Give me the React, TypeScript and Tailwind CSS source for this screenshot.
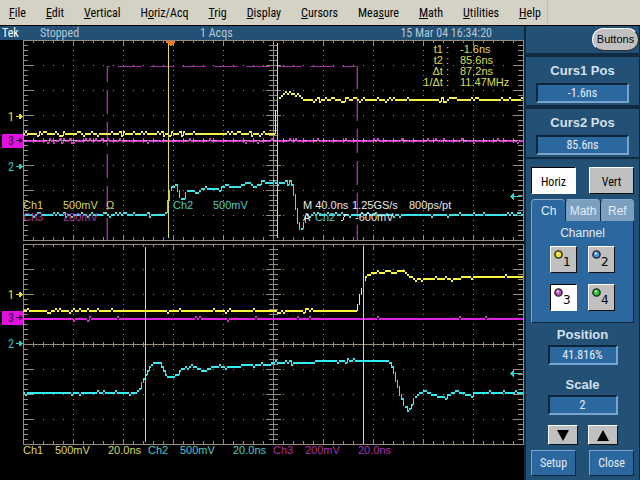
import React, { useMemo, useState } from 'react';

type Point = [number, number];

const YELLOW = '#f4f050';
const CYAN = '#3fe4e8';
const MAGENTA = '#d838d0';
const GRID = '#988c7c';

const MENUS: [string, number][] = [
  ['File', 0], ['Edit', 0], ['Vertical', 0], ['Horiz/Acq', 1], ['Trig', 0], ['Display', 0],
  ['Cursors', 0], ['Measure', 3], ['Math', 0], ['Utilities', 0], ['Help', 0]
];

const TOP_CH1: Point[] = [
  [23, 133], [274, 133], [276, 110], [278, 98], [280, 96], [284, 93], [290, 92], [296, 92],
  [298, 93], [301, 97], [305, 100], [523, 99]
];
const TOP_CH2: Point[] = [
  [23, 214], [164, 214], [166, 211], [168, 200], [170, 190], [172, 186], [176, 184], [178, 189],
  [180, 196], [184, 198], [187, 190], [190, 189], [198, 192], [203, 187], [212, 188], [240, 185],
  [270, 182], [291, 181], [293, 188], [296, 208], [298, 222], [301, 232], [304, 222], [307, 213],
  [310, 215], [523, 214]
];
const TOP_CH3: Point[] = [[23, 140], [523, 140]];

const ZOOM_CH1: Point[] = [
  [23, 310], [357, 310], [359, 297], [361, 291], [363, 284], [365, 277], [368, 274], [374, 271],
  [384, 271], [389, 270], [395, 272], [400, 269], [404, 269], [408, 274], [413, 277], [430, 278],
  [460, 277], [523, 276]
];
const ZOOM_CH2: Point[] = [
  [23, 392], [137, 392], [140, 388], [144, 377], [147, 371], [150, 365], [153, 362], [160, 362],
  [163, 367], [167, 375], [174, 376], [178, 373], [181, 368], [196, 366], [203, 370], [212, 367],
  [240, 365], [270, 363], [300, 362], [330, 360], [388, 360], [391, 364], [394, 372], [397, 383],
  [400, 394], [404, 403], [408, 409], [411, 406], [415, 396], [419, 392], [426, 390], [432, 394],
  [443, 396], [449, 394], [456, 390], [467, 394], [480, 392], [493, 393], [500, 392], [523, 392]
];
const ZOOM_CH3: Point[] = [[23, 318], [523, 318]];

const levelAt = (points: Point[], x: number) => {
  for (let i = 1; i < points.length; i++) {
    const [x0, y0] = points[i - 1];
    const [x1, y1] = points[i];
    if (x <= x1) return y0 + ((y1 - y0) * (x - x0)) / (x1 - x0);
  }
  return points[points.length - 1][1];
};

const tracePath = (points: Point[], seed: number, noise: number) => {
  let state = seed;
  const random = () => {
    state = (state * 1103515245 + 12345) % 2147483648;
    return state / 2147483648;
  };
  const base = points[0][1];
  let prev = base;
  let d = '';
  for (let x = 23; x < 522; x += 2) {
    const slope = Math.abs(levelAt(points, x + 2) - levelAt(points, x));
    const jitter = slope < 1 && random() < noise ? (random() < 0.7 ? -2 : 2) : 0;
    const y = base + Math.round((levelAt(points, x + 1) - base) / 2) * 2 + jitter;
    const gap = Math.abs(y - prev);
    if (gap > 2) d += `M${x} ${Math.min(y, prev)}h1v${gap + 1}h-1z`;
    d += `M${x} ${y}h${gap > 4 ? 1 : 2}v2h${gap > 4 ? -1 : -2}z`;
    prev = y;
  }
  return d;
};

const Trace: React.FC<{ points: Point[]; color: string; seed: number; noise: number }> = ({ points, color, seed, noise }) => {
  const d = useMemo(() => tracePath(points, seed, noise), [points, seed, noise]);
  return <path d={d} fill={color} />;
};

const Graticule: React.FC<{ top: number }> = ({ top }) => {
  const d = useMemo(() => {
    let ticks = '';
    let dots = '';
    for (let i = 1; i < 50; i++) {
      const x = 23 + i * 10;
      const size = i % 5 === 0 ? 5 : 3;
      ticks += `M${x} ${top}h1v${size}h-1zM${x} ${top + 200 - size}h1v${size}h-1z`;
      ticks += `M${x} ${top + 98}h1v5h-1z`;
      for (let row = 1; row < 8; row++) dots += `M${x} ${top + row * 25}h1v1h-1z`;
    }
    for (let i = 1; i < 40; i++) {
      const y = top + i * 5;
      const size = i % 5 === 0 ? 10 : 5;
      const half = i % 5 === 0 ? 7 : 4;
      ticks += `M23 ${y}h${size}v1h-${size}zM${523 - size} ${y}h${size}v1h-${size}z`;
      ticks += `M${273 - half} ${y}h${half * 2 + 1}v1h-${half * 2 + 1}z`;
      for (let col = 1; col < 10; col++) dots += `M${23 + col * 50} ${y}h1v1h-1z`;
    }
    return ticks + dots;
  }, [top]);

  return (
    <g fill={GRID}>
      <rect x="23" y={top} width="501" height="1" />
      <rect x="23" y={top + 200} width="501" height="1" />
      <rect x="23" y={top} width="1" height="201" />
      <rect x="523" y={top} width="1" height="201" />
      <rect x="273" y={top} width="1" height="201" />
      <rect x="23" y={top + 100} width="501" height="1" />
      <path d={d} />
    </g>
  );
};

const Marker: React.FC<{ label: string; y: number; color: string; boxed?: boolean }> = ({ label, y, color, boxed }) => (
  <g fill={boxed ? '#400840' : color}>
    {boxed && <rect x="2" y={y - 6} width="21" height="14" fill="#e010e0" />}
    <text x="8" y={y + 5} className="font-['Roboto_Condensed','Liberation_Sans',sans-serif] text-[12px]">{label}</text>
    <path d={`M16 ${y}h3v-2h2v1h1v1h1v1h-1v1h-1v1h-2v-2h-3z`} />
  </g>
);

const Readout: React.FC<{ x: number; y: number; color: string; children: string }> = ({ x, y, color, children }) => (
  <text x={x} y={y} fill={color}>{children}</text>
);

const Scope: React.FC = () => (
  <svg
    viewBox="0 40 524 440"
    className="block w-full font-['Liberation_Sans',sans-serif] text-[11px]"
    shapeRendering="crispEdges"
    role="img"
    aria-label="Waveforms"
  >
    <rect x="0" y="40" width="524" height="440" fill="#000" />
    <Graticule top={40} />
    <Graticule top={244} />

    {/* Zoom box */}
    <g stroke="#a42ca8" fill="none">
      <path d="M107 66.5h250" strokeDasharray="24 8" strokeDashoffset="21" />
      <path d="M107.5 66v174" strokeDasharray="24 8" strokeDashoffset="8" />
      <path d="M357.5 66v174" strokeDasharray="24 8" strokeDashoffset="1" />
      <path d="M106.5 66v174" stroke="#400c44" strokeDasharray="24 8" strokeDashoffset="8" />
      <path d="M356.5 66v174" stroke="#400c44" strokeDasharray="24 8" strokeDashoffset="1" />
    </g>

    <Trace points={TOP_CH3} color={MAGENTA} seed={31} noise={0.16} />
    <path d="M23 140.5h500" stroke="#e8a0dc" strokeDasharray="4 2 1 3" />
    <Trace points={TOP_CH1} color={YELLOW} seed={7} noise={0.3} />
    <Trace points={TOP_CH2} color={CYAN} seed={19} noise={0.3} />
    <path d="M275 110h1v24h-1z" fill={YELLOW} />

    <Trace points={ZOOM_CH3} color="#e020e0" seed={77} noise={0.06} />
    <Trace points={ZOOM_CH1} color="#fcf838" seed={53} noise={0.12} />
    <Trace points={ZOOM_CH2} color="#30ecf4" seed={91} noise={0.1} />

    {/* Cursors */}
    <g fill="#dcdc50">
      <rect x="168" y="43" width="1" height="195" />
      <rect x="277" y="43" width="1" height="195" />
      <rect x="145" y="247" width="1" height="195" />
      <rect x="363" y="247" width="1" height="197" />
    </g>
    <path d="M166 41h9v2h-1l-3 3h-1l-3 -3h-1z" fill="#f47820" />

    <Marker label="1" y={116} color="#e8e030" />
    <Marker label="3" y={140} color="" boxed />
    <Marker label="2" y={166} color="#30c8c8" />
    <Marker label="1" y={294} color="#e8e030" />
    <Marker label="3" y={317} color="" boxed />
    <Marker label="2" y={343} color="#30c8c8" />
    <path d="M510 196h1v-1h1v-1h1v-1h1v3h8v1h-8v3h-1v-1h-1v-1h-1v-1h-1z" fill="#30d0d0" />
    <path d="M510 373h1v-1h1v-1h1v-1h1v3h8v1h-8v3h-1v-1h-1v-1h-1v-1h-1z" fill="#30d0d0" />

    <g fill="#dcdc58">
      <g textAnchor="end">
        <text x="449" y="53">t1 :</text>
        <text x="449" y="64">t2 :</text>
        <text x="449" y="75">Δt :</text>
        <text x="449" y="86">1/Δt :</text>
      </g>
      <text x="460" y="53">-1.6ns</text>
      <text x="460" y="64">85.6ns</text>
      <text x="460" y="75">87.2ns</text>
      <text x="460" y="86">11.47MHz</text>
    </g>

    <Readout x={23} y={209} color="#d8d860">Ch1</Readout>
    <Readout x={63} y={209} color="#d8d860">500mV</Readout>
    <Readout x={106} y={209} color="#d8d860">Ω</Readout>
    <Readout x={173} y={209} color="#50c8c8">Ch2</Readout>
    <Readout x={213} y={209} color="#50c8c8">500mV</Readout>
    <Readout x={303} y={209} color="#e8e8e8">M 40.0ns</Readout>
    <Readout x={352} y={209} color="#e8e8e8">1.25GS/s</Readout>
    <Readout x={409} y={209} color="#e8e8e8">800ps/pt</Readout>
    <Readout x={23} y={221} color="#a838a8">Ch3</Readout>
    <Readout x={63} y={221} color="#a838a8">200mV</Readout>
    <Readout x={303} y={221} color="#e8e8e8">A</Readout>
    <Readout x={315} y={221} color="#50c8c8">Ch2</Readout>
    <Readout x={355} y={221} color="#e8e8e8">-600mV</Readout>
    <path d="M341 220h2l2 -6h2" stroke="#e8e8e8" fill="none" />

    <Readout x={23} y={454} color="#d8d860">Ch1</Readout>
    <Readout x={55} y={454} color="#d8d860">500mV</Readout>
    <Readout x={108} y={454} color="#d8d860">20.0ns</Readout>
    <Readout x={148} y={454} color="#50c8c8">Ch2</Readout>
    <Readout x={180} y={454} color="#50c8c8">500mV</Readout>
    <Readout x={233} y={454} color="#50c8c8">20.0ns</Readout>
    <Readout x={273} y={454} color="#b030b0">Ch3</Readout>
    <Readout x={305} y={454} color="#b030b0">200mV</Readout>
    <Readout x={358} y={454} color="#b030b0">20.0ns</Readout>
  </svg>
);

const FIELD = 'block h-5 border-2 border-t-[#0e2438] border-l-[#0e2438] border-r-[#78a4d0] border-b-[#78a4d0] bg-[#2c68a0] text-center text-[12px] leading-4 text-[#e4ecf4] outline-none';
const RAISED = 'border border-t-white border-l-white border-r-[#101010] border-b-[#101010] bg-[#c0c0c0] text-black';
const PRESSED = 'border border-t-black border-l-black border-r-white border-b-white bg-white text-black';
const BLUE = 'border border-t-[#78a4d0] border-l-[#78a4d0] border-r-[#0e2438] border-b-[#0e2438] bg-[#2c68a0]';

const Field: React.FC<{ id: string; label: string; initial: string; wide?: boolean }> = ({ id, label, initial, wide }) => {
  const [value, setValue] = useState(initial);
  return (
    <div className="flex flex-col items-center">
      <label htmlFor={id} className="font-['Liberation_Sans',sans-serif] text-[13px] leading-4 font-bold text-[#d4e0ec]">{label}</label>
      <input
        id={id}
        value={value}
        onChange={(e) => setValue(e.target.value)}
        className={`${FIELD} ${wide ? 'mt-1 w-[93px]' : 'mt-0.5 w-[70px]'}`}
      />
    </div>
  );
};

const KNOBS = [
  { id: '1', color: '#e8e020' },
  { id: '2', color: '#4890e0' },
  { id: '3', color: '#b850c0' },
  { id: '4', color: '#20c820' }
];

const SidePanel: React.FC = () => {
  const [axis, setAxis] = useState('Horiz');
  const [tab, setTab] = useState('Ch');
  const [channel, setChannel] = useState('3');

  return (
    <aside className="flex w-[116px] shrink-0 flex-col border-r border-l-2 border-r-[#10283c] border-l-[#10283c] bg-[#235075]">
      <div className="flex h-[27px] justify-end pt-0.5">
        <button className="h-[23px] w-[47px] rounded-[12px] border border-t-white border-l-white border-r-[#303030] border-b-[#303030] bg-[#c0c0c0] font-['Liberation_Sans',sans-serif] text-[11px] leading-none text-black">Buttons</button>
      </div>
      <div className="border-t-4 border-[#122a40] pt-[6px] pb-[2px]">
        <Field id="curs1" label="Curs1 Pos" initial="-1.6ns" wide />
      </div>
      <div className="border-t-4 border-[#122a40] pt-[6px] pb-[2px]">
        <Field id="curs2" label="Curs2 Pos" initial="85.6ns" wide />
      </div>

      <div className="flex flex-col border-t-2 border-[#122a40] px-[5px]">
        <div className="mt-2 flex justify-between text-[12px]">
          {['Horiz', 'Vert'].map((name) => (
            <button key={name} onClick={() => setAxis(name)} className={`h-[27px] w-[45px] pt-0.5 ${axis === name ? PRESSED : RAISED}`}>
              {name}
            </button>
          ))}
        </div>

        <div className="mt-[5px] flex font-['Liberation_Sans',sans-serif] text-[12px] text-[#e4ecf4]">
          {['Ch', 'Math', 'Ref'].map((name) => (
            <button
              key={name}
              onClick={() => setTab(name)}
              className={`h-[22px] flex-1 rounded-t-[4px] border-t border-t-[#88acd0] ${tab === name ? 'border-l border-l-[#78a4d0] bg-[#2c68a0]' : 'border-l border-l-[#0e2438] bg-[#7a9fc0]'}`}
            >
              {name}
            </button>
          ))}
        </div>
        <div className="h-[102px] border-r border-b border-l border-r-[#0e2438] border-b-[#0e2438] border-l-[#78a4d0] bg-[#2c68a0] pt-1 text-center">
          <div className="font-['Liberation_Sans',sans-serif] text-[12px] leading-4 text-[#e4ecf4]">Channel</div>
          <div className="mt-[5px] grid grid-cols-[27px_27px] justify-center gap-[11px]">
            {KNOBS.map((knob) => (
              <button
                key={knob.id}
                onClick={() => setChannel(knob.id)}
                className={`flex h-[27px] w-[27px] items-start pt-[3px] pl-[3px] ${channel === knob.id ? PRESSED : RAISED}`}
              >
                <svg width="9" height="9" viewBox="0 0 9 9" className="shrink-0">
                  <circle cx="4.5" cy="4.5" r="3.6" fill={knob.color} stroke="#202020" strokeWidth="1.4" />
                  <circle cx="3.8" cy="3.5" r="1.2" fill="#fff" fillOpacity="0.8" />
                </svg>
                <span className="mt-1 font-['DejaVu_Sans',sans-serif] text-[12px] leading-4">{knob.id}</span>
              </button>
            ))}
          </div>
        </div>
      </div>

      <div className="mt-1">
        <Field id="position" label="Position" initial="41.816%" />
      </div>
      <div className="mt-3">
        <Field id="scale" label="Scale" initial="2" />
      </div>

      <div className="mt-[10px] flex justify-center gap-[10px]">
        <button aria-label="Decrease" className={`flex h-5 w-[30px] items-center justify-center ${RAISED}`}>
          <svg width="12" height="11" viewBox="0 0 12 11"><path d="M0 0h12L6 11z" /></svg>
        </button>
        <button aria-label="Increase" className={`flex h-5 w-[30px] items-center justify-center ${RAISED}`}>
          <svg width="12" height="11" viewBox="0 0 12 11"><path d="M0 11h12L6 0z" /></svg>
        </button>
      </div>
      <div className="mt-[5px] mb-1 flex justify-between px-[5px] text-[12px] text-[#e4ecf4]">
        <button className={`h-[26px] w-[45px] ${BLUE}`}>Setup</button>
        <button className={`h-[26px] w-[45px] ${BLUE}`}>Close</button>
      </div>
    </aside>
  );
};

const App: React.FC = () => (
  <div className="flex min-h-screen flex-col bg-black font-['Roboto_Condensed','Liberation_Sans',sans-serif]">
    <nav className="flex h-[26px] border-b border-black bg-[#d4d2c4] text-[12px] text-black">
      <div className="flex items-center gap-5 border-r border-[#bcbcb0] pr-[6px] pl-[9px]">
        {MENUS.map(([name, key]) => (
          <button key={name} className="whitespace-nowrap">
            {name.slice(0, key)}<span className="underline">{name[key]}</span>{name.slice(key + 1)}
          </button>
        ))}
      </div>
    </nav>

    <div className="flex flex-1">
      <main className="min-w-0 flex-1">
        <header className="flex h-[14px] items-center bg-[#235075] pr-8 pl-[2px] text-[12px] leading-[14px] text-[#b4c8d8]">
          <span className="w-[38px] text-white">Tek</span>
          <span className="w-40">Stopped</span>
          <span>1 Acqs</span>
          <span className="ml-auto">15 Mar 04 16:34:20</span>
        </header>
        <Scope />
      </main>
      <SidePanel />
    </div>
  </div>
);

export default App;
